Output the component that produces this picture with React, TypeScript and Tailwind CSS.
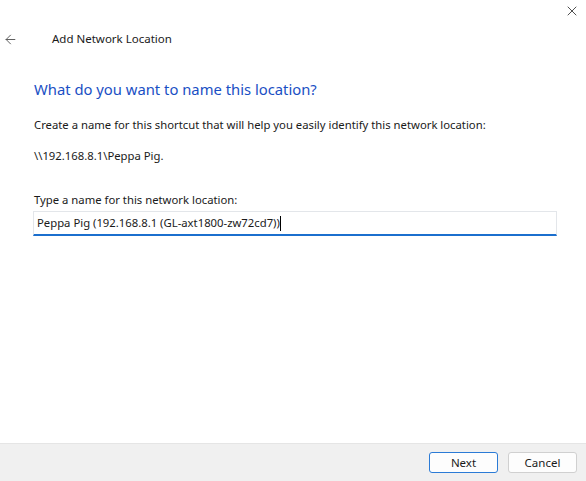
import { ArrowLeft, X } from 'lucide-react';

const font = { fontFamily: '"Noto Sans", "Open Sans", sans-serif' };

export default function App() {
  return (
    <div className="flex h-[481px] w-[586px] flex-col bg-white text-[11.3px] text-[#1a1a1a]" style={font}>
      <div className="flex h-[22px] justify-end pr-[6px] pt-[3px]">
        <X className="h-[16px] w-[16px] text-[#333]" strokeWidth={1.3} />
      </div>

      <div className="flex h-[34px] items-center pl-[3px]">
        <ArrowLeft className="h-[15px] w-[15px] text-[#555]" strokeWidth={1.5} />
        <span className="ml-[34px] text-[11.5px] text-[#1a1a1a]">Add Network Location</span>
      </div>

      <div className="flex flex-1 flex-col px-[34px]">
        <h1 className="mt-[23px] text-[14.8px] leading-[20px] text-[#1a4fc4]">What do you want to name this location?</h1>
        <p className="mt-[18px] leading-[16px]">
          Create a name for this shortcut that will help you easily identify this network location:
        </p>
        <p className="mt-[15px] leading-[16px]">\\192.168.8.1\Peppa Pig.</p>

        <label className="mt-[28px] leading-[16px]">Type a name for this network location:</label>
        <div className="ml-[-1px] mt-[3px] flex h-[25px] w-[524px] items-center border border-[#e3e6ea] border-b-[2px] border-b-[#1b6fce] bg-white pl-[3px]">
          <span>Peppa Pig (192.168.8.1 (GL-axt1800-zw72cd7))</span>
          <span className="h-[15px] w-px bg-black" />
        </div>
      </div>

      <div className="flex h-[38px] items-center justify-end gap-[10px] border-t border-[#e5e5e5] bg-[#f0f0f0] pr-[9px]">
        <button className="h-[21px] w-[69px] rounded-[3px] border border-[#2b7bd6] bg-[#fdfdfd] text-[11.5px]">Next</button>
        <button className="h-[21px] w-[69px] rounded-[3px] border border-[#d0d0d0] bg-[#fdfdfd] text-[11.5px]">Cancel</button>
      </div>
    </div>
  );
}
